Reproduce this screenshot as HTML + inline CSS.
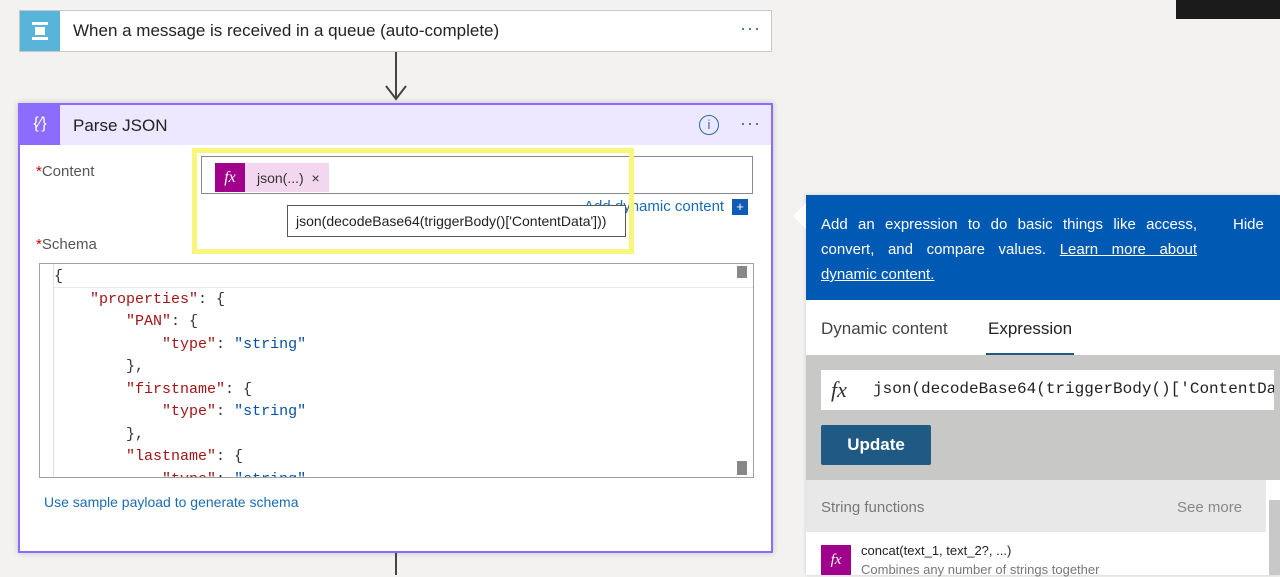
<!DOCTYPE html>
<html><head><style>
*{box-sizing:border-box;margin:0;padding:0}
body{width:1280px;height:575px;background:#f3f2f1;font-family:"Liberation Sans",sans-serif;position:relative;overflow:hidden}
.abs{position:absolute}
.mono{font-family:"Liberation Mono",monospace}
</style></head><body>
<div class="abs" style="left:1176px;top:0;width:104px;height:19px;background:#1b1b1b"></div>
<!-- trigger -->
<div class="abs" style="left:19px;top:10px;width:753px;height:42px;background:#fff;border:1px solid #c8c8c8"></div>
<div class="abs" style="left:20px;top:11px;width:40px;height:40px;background:#59b4d9"></div>
<svg class="abs" style="left:28px;top:19px" width="24" height="24" viewBox="0 0 24 24"><rect x="4" y="3" width="16" height="3" fill="#fff"/><rect x="4" y="18" width="16" height="3" fill="#fff"/><rect x="7" y="8" width="10" height="8" fill="#fff"/></svg>
<div class="abs" style="left:73px;top:21px;font-size:17px;color:#222">When a message is received in a queue (auto-complete)</div>
<div class="abs" style="left:740px;top:18px;font-size:18px;color:#2b6cb0;letter-spacing:1px">···</div>
<div class="abs" style="left:395px;top:52px;width:2px;height:46px;background:#444"></div>
<svg class="abs" style="left:384px;top:84px" width="24" height="18"><path d="M2 2 L12 15 L22 2" fill="none" stroke="#444" stroke-width="2"/></svg>
<!-- parse json -->
<div class="abs" style="left:18px;top:103px;width:755px;height:450px;background:#fff;border:2px solid #8c6cff;box-shadow:0 0 6px rgba(0,0,0,.2)"></div>
<div class="abs" style="left:20px;top:105px;width:751px;height:40px;background:#ede8ff"></div>
<div class="abs" style="left:20px;top:105px;width:40px;height:40px;background:#8c6cff;color:#fff;font-size:16px;text-align:center;line-height:38px">{⁄}</div>
<div class="abs" style="left:73px;top:116px;font-size:17px;color:#222">Parse JSON</div>
<div class="abs" style="left:699px;top:115px;width:20px;height:20px;border:1.5px solid #2b6cb0;border-radius:50%;color:#2b6cb0;font-size:13px;text-align:center;line-height:17px">i</div>
<div class="abs" style="left:740px;top:113px;font-size:18px;color:#2b6cb0;letter-spacing:1px">···</div>
<div class="abs" style="left:36px;top:163px;font-size:15px;color:#555"><span style="color:#c00">*</span>Content</div>
<div class="abs" style="left:36px;top:236px;font-size:15px;color:#555"><span style="color:#c00">*</span>Schema</div>
<div class="abs" style="left:201px;top:156px;width:552px;height:38px;background:#fff;border:1px solid #8a8a8a"></div>
<div class="abs" style="left:215px;top:163px;width:114px;height:29px;background:#f2d7ef"></div>
<div class="abs" style="left:215px;top:163px;width:30px;height:29px;background:#a0008c;color:#fff;font-family:'Liberation Serif',serif;font-style:italic;font-size:16px;text-align:center;line-height:29px">fx</div>
<div class="abs" style="left:257px;top:170px;font-size:14px;color:#333">json(...) &nbsp;×</div>
<div class="abs" style="left:584px;top:198px;font-size:15px;color:#1a6bb5">Add dynamic content</div>
<div class="abs" style="left:732px;top:199px;width:16px;height:16px;background:#0f5bb5;color:#fff;font-size:13px;text-align:center;line-height:16px">+</div>
<div class="abs" style="left:287px;top:205px;width:339px;height:32px;background:#fff;border:1px solid #555;font-size:14px;color:#222;padding:7px 0 0 8px;white-space:nowrap">json(decodeBase64(triggerBody()['ContentData']))</div>
<div class="abs" style="left:192px;top:148px;width:442px;height:106px;border:5px solid #f8f77c"></div>
<!-- schema editor -->
<div class="abs" style="left:39px;top:263px;width:715px;height:215px;background:#fff;border:1px solid #a0a0a0;overflow:hidden">
<div class="abs" style="left:14px;top:0;width:700px;height:24px;border-bottom:1px solid #e8e8e8"></div>
<div class="abs" style="left:0;top:0;width:14px;height:215px;border-right:1px solid #ddd"></div>
<div class="abs" style="left:697px;top:2px;width:10px;height:12px;background:#888"></div>
<div class="abs" style="left:697px;top:197px;width:10px;height:14px;background:#888"></div>
<pre class="abs mono" style="left:14px;top:2px;font-size:15px;line-height:22.5px;color:#333">{
    <span style="color:#a31515">"properties"</span>: {
        <span style="color:#a31515">"PAN"</span>: {
            <span style="color:#a31515">"type"</span>: <span style="color:#0451a5">"string"</span>
        },
        <span style="color:#a31515">"firstname"</span>: {
            <span style="color:#a31515">"type"</span>: <span style="color:#0451a5">"string"</span>
        },
        <span style="color:#a31515">"lastname"</span>: {
            <span style="color:#a31515">"type"</span>: <span style="color:#0451a5">"string"</span></pre>
</div>
<div class="abs" style="left:44px;top:494px;font-size:14px;color:#1a6bb5">Use sample payload to generate schema</div>
<div class="abs" style="left:395px;top:553px;width:2px;height:22px;background:#444"></div>
<!-- right panel -->
<div class="abs" style="left:806px;top:195px;width:474px;height:380px;background:#fff;box-shadow:0 0 4px rgba(0,0,0,.15)"></div>
<div class="abs" style="left:793px;top:203px;width:0;height:0;border-top:13px solid transparent;border-bottom:13px solid transparent;border-right:13px solid #fff"></div>
<div class="abs" style="left:806px;top:195px;width:474px;height:105px;background:#005ab4"></div>
<div class="abs" style="left:821px;top:212px;width:376px;font-size:15px;line-height:25px;color:#fff;text-align:justify">Add an expression to do basic things like access, convert, and compare values. <u>Learn more about dynamic content.</u></div>
<div class="abs" style="left:1233px;top:216px;font-size:15px;color:#fff">Hide</div>
<div class="abs" style="left:821px;top:319px;font-size:17px;color:#444">Dynamic content</div>
<div class="abs" style="left:988px;top:319px;font-size:17px;color:#222">Expression</div>
<div class="abs" style="left:986px;top:353px;width:88px;height:3px;background:#1f5a84"></div>
<div class="abs" style="left:806px;top:355px;width:474px;height:125px;background:#c8c8c6"></div>
<div class="abs" style="left:821px;top:370px;width:453px;height:40px;background:#fff;overflow:hidden;white-space:nowrap">
<span class="abs" style="left:10px;top:7px;font-family:'Liberation Serif',serif;font-style:italic;font-size:22px;color:#333">fx</span>
<span class="abs mono" style="left:52px;top:10px;font-size:16px;color:#222">json(decodeBase64(triggerBody()['ContentData']))</span></div>
<div class="abs" style="left:821px;top:425px;width:110px;height:40px;background:#1f5a84;border-radius:2px;color:#fff;font-size:17px;font-weight:bold;text-align:center;line-height:40px">Update</div>
<div class="abs" style="left:806px;top:480px;width:460px;height:52px;background:#e8e8e8"></div>
<div class="abs" style="left:821px;top:499px;font-size:15px;color:#777">String functions</div>
<div class="abs" style="left:1177px;top:499px;font-size:15px;color:#888">See more</div>
<div class="abs" style="left:1269px;top:500px;width:11px;height:75px;background:#c8c8c8"></div>
<div class="abs" style="left:821px;top:545px;width:30px;height:30px;background:#a0008c;color:#fff;font-family:'Liberation Serif',serif;font-style:italic;font-size:15px;text-align:center;line-height:30px">fx</div>
<div class="abs" style="left:861px;top:543px;font-size:13px;color:#222">concat(text_1, text_2?, ...)</div>
<div class="abs" style="left:861px;top:562px;font-size:13px;color:#777">Combines any number of strings together</div>
</body></html>
